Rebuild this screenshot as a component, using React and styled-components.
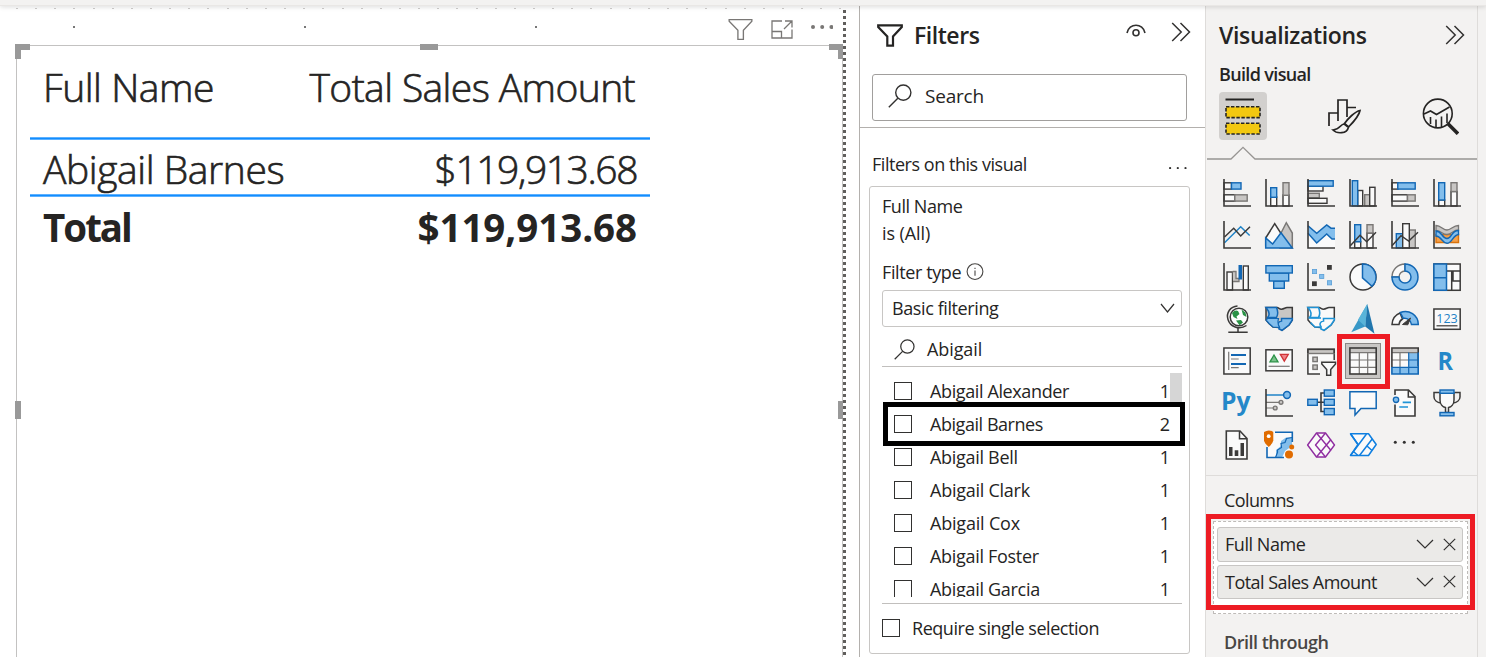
import React from 'react';
import styled, { createGlobalStyle } from 'styled-components';

const Global = createGlobalStyle`
  * { box-sizing: border-box; }
  body { margin: 0; background: #fff; overflow: hidden; }
  #root { font-family: "Open Sans", "Noto Sans", sans-serif; color: #252423; }
`;

const DARK = '#3b3a39';
const BLUE = '#83beec';
const BLUE_EDGE = '#1267b4';
const GRAY = '#c8c6c4';
const GRAY_EDGE = '#797775';
const PAPER = '#fafafa';

/* ---------- page frame ---------- */

const Page = styled.div`
  width: 1486px;
  height: 657px;
  display: flex;
  flex-direction: column;
  overflow: hidden;
`;
const TopBar = styled.div`
  height: 6px;
  flex: none;
  background: #f3f2f1;
  border-bottom: 1px solid #e9e7e5;
  box-shadow: 0 1px 5px rgba(0, 0, 0, 0.14);
  position: relative;
  z-index: 2;
`;
const Main = styled.div`
  flex: 1;
  min-height: 0;
  display: flex;
`;
const Label = styled.span`
  display: block;
  white-space: nowrap;
  font-size: ${(p) => p.$size || 18}px;
  font-weight: ${(p) => p.$weight || 400};
  line-height: ${(p) => p.$line || 26}px;
  letter-spacing: ${(p) => p.$track || 0}px;
  color: ${(p) => p.$color || 'inherit'};
`;
const TableText = styled(Label)`
  font-size: ${(p) => p.$size || 39}px;
  line-height: 44px;
  font-weight: ${(p) => (p.$bold ? 700 : 300)};
  -webkit-text-stroke: ${(p) => (p.$bold ? 0 : 0.65)}px #252423;
`;

/* ---------- report canvas ---------- */

const Canvas = styled.section`
  width: 859px;
  flex: none;
  position: relative;
  display: flex;
  background: #fff;
`;
const CanvasBody = styled.div`
  width: 843px;
  display: flex;
  flex-direction: column;
`;
const GridDots = styled.div`
  height: 1px;
  margin: 2px 0 0 16px;
  background: repeating-linear-gradient(90deg, #cfcdcb 0 2px, transparent 2px 19.15px);
`;
const VisualHeader = styled.div`
  height: 36px;
  display: flex;
  align-items: center;
  justify-content: flex-end;
  padding: 4px 10px 0 0;
  gap: 18px;
  position: relative;
`;
const MoreDots = styled.span`
  display: flex;
  padding-bottom: 4px;
`;
const Speck = styled.i`
  position: absolute;
  top: 17px;
  left: ${(p) => p.$x}px;
  width: 2px;
  height: 2px;
  background: #777;
`;
const PageEdge = styled.div`
  width: 3px;
  margin-top: 4px;
  background: repeating-linear-gradient(180deg, #605e5c 0 3px, transparent 3px 6px);
`;
const Visual = styled.div`
  flex: 1;
  margin-left: 16px;
  border: 1px solid #c3c2c1;
  border-bottom: 0;
  position: relative;
  padding: 18px 0 0 13px;
`;
const Handle = styled.i`
  position: absolute;
  left: ${(p) => p.$x}px;
  top: ${(p) => p.$y}px;
  width: ${(p) => p.$w}px;
  height: ${(p) => p.$h}px;
  background: #999;
`;
const SalesTable = styled.div`
  width: 620px;
  display: flex;
  flex-direction: column;
`;
const SalesRow = styled.div`
  display: flex;
  justify-content: space-between;
  height: ${(p) => p.$h}px;
  padding: ${(p) => p.$top}px ${(p) => p.$right || 13}px 0 13px;
`;
const Rule = styled.div`
  height: 3px;
  background: linear-gradient(#5cb0ff 0 1px, #118dff 1px 2px, #5cb0ff 2px);
`;

/* ---------- filters pane ---------- */

const FiltersPane = styled.aside`
  width: 346px;
  flex: none;
  border-left: 1px solid #b3b0ad;
  background: #fff;
`;
const FiltersTop = styled.div`
  height: 122px;
  border-bottom: 1px solid #b3b0ad;
  padding: 11px 18px 0 12px;
`;
const PaneTitleRow = styled.div`
  display: flex;
  height: 36px;
  align-items: center;
`;
const FilterTitleIcon = styled.span`
  display: flex;
  margin: 0 11px 0 5px;
`;
const PaneActions = styled.div`
  margin: 0 -4px 0 auto;
  display: flex;
  gap: 25px;
  align-items: center;
  padding-bottom: 6px;
`;
const EyeSlot = styled.span`
  display: flex;
  padding-bottom: 2px;
`;
const SearchBox = styled.div`
  height: 47px;
  margin-top: 21px;
  border: 1px solid #a19f9d;
  border-radius: 3px;
  display: flex;
  align-items: center;
  gap: 13px;
  padding: 0 0 3px 15px;
`;
const SectionTitle = styled.div`
  display: flex;
  justify-content: space-between;
  align-items: center;
  padding: 23px 18px 0 12px;
  height: 49px;
`;
const SectionDots = styled.span`
  display: flex;
  padding-top: 8px;
`;
const FilterCard = styled.div`
  margin: 9px 15px 0 9px;
  height: 468px;
  border: 1px solid #c8c6c4;
  border-radius: 3px;
  padding: 6px 7px 0 12px;
`;
const FilterTypeRow = styled.div`
  display: flex;
  align-items: center;
  gap: 5px;
  margin-top: 12px;
  height: 26px;
`;
const Select = styled.div`
  height: 37px;
  margin-top: 5px;
  border: 1px solid #c8c6c4;
  border-radius: 3px;
  display: flex;
  justify-content: space-between;
  align-items: center;
  padding: 0 6px 1px 9px;
`;
const ListSearch = styled.div`
  height: 40px;
  border-bottom: 1px solid #c1bfbd;
  display: flex;
  align-items: center;
  gap: 12px;
  padding: 5px 0 0 12px;
`;
const NameList = styled.div`
  height: 230px;
  padding-top: 7px;
  overflow: hidden;
  position: relative;
`;
const NameRow = styled.div`
  height: 33px;
  display: flex;
  align-items: center;
  padding: 0 12px 0 12px;
`;
const Checkbox = styled.span`
  flex: none;
  width: 18px;
  height: 18px;
  border: 1px solid #323130;
  background: #fff;
  margin-right: ${(p) => p.$gap}px;
`;
const Count = styled.span`
  margin-left: auto;
  font-size: 18px;
`;
const ScrollThumb = styled.i`
  position: absolute;
  right: 0;
  top: 6px;
  width: 12px;
  height: 30px;
  background: #d6d6d6;
`;
const ListRule = styled.div`
  height: 1px;
  margin-top: 6px;
  background: #c1bfbd;
`;
const RequireRow = styled.div`
  display: flex;
  align-items: center;
  height: 48px;
`;
const NameMark = styled.div`
  position: absolute;
  left: 883px;
  top: 402px;
  width: 302px;
  height: 44px;
  border: 5px solid #000;
  z-index: 3;
`;

/* ---------- visualizations pane ---------- */

const VizPane = styled.aside`
  width: 273px;
  flex: none;
  background: #f3f2f1;
  border: solid #dedcda;
  border-width: 0 1px;
  display: flex;
  flex-direction: column;
`;
const Margin = styled.div`
  flex: 1;
  background: #f3f2f1;
`;
const VizTitleRow = styled(PaneTitleRow)`
  margin-top: 11px;
  padding: 0 12px 0 13px;
  justify-content: space-between;
`;
const BuildLabel = styled.div`
  margin-top: 8px;
  padding-left: 13px;
`;
const TabRow = styled.div`
  height: 48px;
  margin-top: 5px;
  padding: 0 18px 0 13px;
  display: flex;
  justify-content: space-between;
  align-items: center;
`;
const ActiveTab = styled.span`
  width: 48px;
  height: 48px;
  border-radius: 4px;
  background: #d2d0ce;
  display: grid;
  place-items: center;
`;
const Notch = styled.svg`
  display: block;
  width: 270px;
  height: 14px;
  margin: 6px 0 0 1px;
`;
const IconGrid = styled.div`
  display: grid;
  grid-template-columns: repeat(6, 42px);
  grid-auto-rows: 42px;
  margin: 12px 0 0 10px;
`;
const IconCell = styled.div`
  display: grid;
  place-items: center;
  ${(p) =>
    p.$selected &&
    `background: #c8c6c4; box-shadow: inset 0 0 0 1px #8a8886; margin: 3px;`}
`;
const VizIcon = styled.svg`
  width: 28px;
  height: 28px;
  overflow: visible;
  display: block;
`;
const Fields = styled.div`
  margin-top: 9px;
  border-top: 1px solid #dedcda;
`;
const FieldsTitle = styled.div`
  padding: 11px 0 0 18px;
`;
const Well = styled.div`
  margin: 8px 10px 0 7px;
  width: 255px;
  height: 93px;
  border: 1px dashed #bebbb8;
  background: #fff;
  padding: 5px 4px 0 3px;
`;
const Pill = styled.div`
  height: ${(p) => p.$h}px;
  margin-bottom: 3px;
  border: 1px solid #c8c6c4;
  border-radius: 3px;
  background: #ebeae8;
  display: flex;
  align-items: center;
  padding: 0 6px 1px 7px;
`;
const PillActions = styled.span`
  margin-left: auto;
  display: flex;
  gap: 9px;
  align-items: center;
`;
const DrillTitle = styled.div`
  padding: 15px 0 0 18px;
`;
const RedMark = styled.div`
  position: absolute;
  left: ${(p) => p.$x}px;
  top: ${(p) => p.$y}px;
  width: ${(p) => p.$w}px;
  height: ${(p) => p.$h}px;
  border: 5px solid #ed1c24;
  z-index: 3;
`;

/* ---------- small drawings ---------- */

const Funnel = ({ w, h, color, stroke }) => (
  <svg width={w} height={h} viewBox="0 0 26 23" fill="none" stroke={color} strokeWidth={stroke}>
    <path d="M1.2 1.3H24.8V3L16 12.4V21.7H10.3V12.4L1.2 3Z" />
  </svg>
);
const Focus = () => (
  <svg width="22" height="19" viewBox="0 0 22 19" fill="none" stroke="#797775" strokeWidth="1.3">
    <path d="M11 1H1V18H21V9.5M1 11.5H10.5V18M13 9L20.5 1.5M14 1H21V7.5" />
  </svg>
);
const Dots = ({ r, gap, color }) => (
  <svg width={gap * 2 + r * 2} height={r * 2} fill={color}>
    {[0, 1, 2].map((i) => (
      <circle key={i} cx={r + i * gap} cy={r} r={r} />
    ))}
  </svg>
);
const Eye = () => (
  <svg width="20" height="14" viewBox="0 0 20 14" fill="none" stroke="#323130" strokeWidth="1.6">
    <path d="M1 9C2 4 6 1.2 10 1.2S18 4 19 9" />
    <circle cx="10" cy="8.7" r="3" />
  </svg>
);
const DoubleChevron = () => (
  <svg width="20" height="20" viewBox="0 0 20 20" fill="none" stroke="#323130" strokeWidth="1.5">
    <path d="M1.2 1L10.2 10L1.2 19M9.5 1L18.5 10L9.5 19" />
  </svg>
);
const Magnifier = ({ size }) => (
  <svg width={size} height={size} viewBox="0 0 24 24" fill="none" stroke="#323130" strokeWidth="1.4">
    <circle cx="15.3" cy="8.6" r="7.6" />
    <path d="M9.8 14.2L0.8 23.2" />
  </svg>
);
const Info = () => (
  <svg width="18" height="18" viewBox="0 0 18 18" fill="none" stroke="#484644" strokeWidth="1.1">
    <circle cx="9" cy="8.6" r="7.9" />
    <path d="M9 7.5V12.8M9 4.7V6" />
  </svg>
);
const Chevron = ({ w = 18 }) => (
  <svg width={w} height="10" viewBox={`0 0 ${w} 10`} fill="none" stroke="#323130" strokeWidth="1.2">
    <path d={`M1 1L${w / 2} 9L${w - 1} 1`} />
  </svg>
);
const Cross = () => (
  <svg width="13" height="13" viewBox="0 0 13 13" fill="none" stroke="#323130" strokeWidth="1.2">
    <path d="M0.8 0.8L12.2 12.2M12.2 0.8L0.8 12.2" />
  </svg>
);
const BuildIcon = () => (
  <svg width="38" height="38" viewBox="0 0 38 38">
    <path d="M1.5 2.5H30" stroke="#252423" strokeWidth="2" />
    <g fill="#f2c811" stroke="#252423" strokeWidth="1.6" strokeDasharray="3.4 1.6">
      <rect x="2" y="9.8" width="34" height="10.8" />
      <rect x="2" y="26.2" width="34" height="10.8" />
    </g>
  </svg>
);
const FormatIcon = () => (
  <svg width="36" height="36" viewBox="0 0 36 36" fill="none" stroke="#252423" strokeWidth="1.7">
    <path d="M2 28V15H11M11 23V2H20V19M20 9.5H29" />
    <path d="M33 12.5C28 13.5 21 20.5 17.5 25.5L21.5 29C26 24.5 32 18 33 12.5Z" fill="#f3f2f1" />
    <path d="M17.2 26C13 26.2 13.5 31.5 6 32C10 36 20 36 21.4 29.3Z" fill="#f3f2f1" />
  </svg>
);
const AnalyticsIcon = () => (
  <svg width="37" height="37" viewBox="0 0 37 37" fill="none" stroke="#252423" strokeWidth="1.6">
    <circle cx="15.8" cy="15.5" r="14.4" />
    <path d="M2 16L8.5 13L14.5 16.5L27.5 9M8.5 19V26M14 21.5V29.5M19.5 18.5V29M25 15.5V25" />
    <path d="M26 25.8L36 35.8" strokeWidth="3.6" />
  </svg>
);

/* ---------- gallery icons, 28 x 28 ---------- */

const Box = ({ x, y, w, h, tone = 'white' }) => {
  const fill = { white: PAPER, blue: BLUE, gray: GRAY }[tone];
  const edge = { white: DARK, blue: BLUE_EDGE, gray: GRAY_EDGE }[tone];
  return <rect x={x} y={y} width={w} height={h} fill={fill} stroke={edge} strokeWidth="1.4" />;
};
const Axis = () => <path d="M1 0V27H28" fill="none" stroke={DARK} strokeWidth="1.6" />;
const Line = ({ d, c = DARK, w = 1.5 }) => <path d={d} fill="none" stroke={c} strokeWidth={w} />;
const Area = ({ d, tone = 'blue' }) => {
  const [fill, edge] = { blue: [BLUE, BLUE_EDGE], gray: [GRAY, GRAY_EDGE], white: [PAPER, DARK] }[tone];
  return <path d={d} fill={fill} stroke={edge} strokeWidth="1.5" />;
};
const OHIO = 'M1 2.5H12C14 3 14.5 4.3 16.5 4.2C19 4.2 20 2.6 22 2.5H27.3V15L24 20L17 25.3L13.8 22.5L8 22L4 18.5L1 15Z';
const OHIO_WEST = 'M1 2.5H11.5C13 6 13.5 9 11.5 12.5H2.5C5 10 4 6 1 2.5Z';
const OHIO_SOUTH = 'M14 24V21.5C12 19.5 13 16.5 16.5 16V13.5H27.3V15L24 20L17 25.3Z';

const icons = [
  <><Box x="1" y="15.8" w="11" h="6.3" /><Box x="1" y="3.8" w="7.5" h="6.3" /><Box x="8.5" y="3.8" w="9.5" h="6.3" tone="blue" /><Box x="11.8" y="15.8" w="12.4" h="6.3" tone="gray" /><Axis /></>,
  <><Box x="5.7" y="18" w="6" h="9" /><Box x="5.7" y="8.7" w="6" h="9.6" tone="blue" /><Box x="18" y="16" w="6" h="11" /><Box x="18" y="3.7" w="6" h="12.6" tone="gray" /><Axis /></>,
  <><Box x="1" y="7" w="15" h="5" /><Box x="1" y="1.7" w="25.2" h="5.5" tone="blue" /><Box x="1" y="14.3" w="11.3" h="4.5" tone="gray" /><Box x="1" y="19.3" w="19" h="5" /><Axis /></>,
  <><Box x="8.7" y="11.5" w="5" h="15.5" /><Box x="3.3" y="1.7" w="5.4" h="25.3" tone="blue" /><Box x="15.7" y="15.7" w="5" h="11.3" tone="gray" /><Box x="20.7" y="8.3" w="5.3" h="18.7" /><Axis /></>,
  <><Box x="1" y="3.8" w="6" h="6.3" /><Box x="6.8" y="3.8" w="17.4" h="6.3" tone="blue" /><Box x="1" y="15.8" w="15.5" h="6.3" /><Box x="16.5" y="15.8" w="7.7" h="6.3" tone="gray" /><Axis /></>,
  <><Box x="5.7" y="21" w="6" h="6" /><Box x="5.7" y="3.7" w="6" h="17.3" tone="blue" /><Box x="18" y="12.5" w="6" h="14.5" /><Box x="18" y="3.7" w="6" h="8.8" tone="gray" /><Axis /></>,

  <><Line d="M1.5 21.8L17.7 5.7L26.7 14.5" c="#1f83c7" /><Line d="M1.5 16L10.7 7.3L17.7 15L27 5.7" /><Axis /></>,
  <><Area d="M15 14L21.3 1.7L27.3 12V27H15Z" tone="gray" /><Area d="M0.7 17L9.7 2.7L17 14L10 24H0.7Z" tone="white" /><Area d="M0.7 27V17L7.7 23L16 11.7L27.3 27Z" /></>,
  <><path d="M1 12.3L9.7 22L19.7 13L28 18V27H1Z" fill={PAPER} /><path d="M1 4.7L9.7 12.3L19.7 4L24 7.2H28V18H25L19.7 13L9.7 22L1 12.3Z" fill={BLUE} /><Line d="M1 4.7L9.7 12.3L19.7 4L24 7.2H28M28 18H25L19.7 13L9.7 22L1 12.3" c={BLUE_EDGE} /><Axis /></>,
  <><Box x="5.7" y="20.5" w="6" h="6.5" /><Box x="5.7" y="3.7" w="6" h="17" tone="blue" /><Box x="18" y="12" w="6" h="15" /><Box x="18" y="3.7" w="6" h="8.3" tone="gray" /><Line d="M1.3 24.7L11 14.3L17.7 20.7L27 11.3" /><Axis /></>,
  <><Box x="5.3" y="12.7" w="6.4" h="14.3" tone="blue" /><Box x="18.3" y="9" w="6" h="18" tone="gray" /><Box x="11.7" y="2.7" w="6.6" h="24.3" /><Line d="M1 24.7L10 14.7L17.7 20L27 11.3" /><Axis /></>,
  <><path d="M3 13.5H25.5V21.5H3Z" fill="#f5a04a" stroke="#d9730d" strokeWidth="1.4" /><path d="M3 4.5C8 4.5 10 9 14 9C18 9 20 4.5 25.5 4.5V9C20 9 19 13.5 14 13.5C9 13.5 9 10 3 9.5Z" fill={GRAY} stroke={GRAY_EDGE} strokeWidth="1.3" /><path d="M3 10C9 10 9 17.5 14 17.5C19 17.5 18 9.5 25.5 9.5V13.5C20 14 19 22.3 14 22.3C9 22.3 9 15.5 3 15Z" fill={BLUE} stroke={BLUE_EDGE} strokeWidth="1.4" /><Axis /></>,

  <><Box x="4" y="9" w="5.5" h="18" /><path d="M9.7 8.5H13V15.5H16V18.5H10" fill={GRAY} stroke={GRAY_EDGE} strokeWidth="1.3" /><rect x="15.5" y="2" width="3.5" height="14.5" fill={BLUE_EDGE} /><Box x="20.3" y="3" w="5" h="24" /><Axis /></>,
  <><Box x="8.7" y="18" w="10.6" h="7.3" tone="blue" /><Box x="4.3" y="10" w="19.4" h="8" tone="blue" /><Box x="0.9" y="2.7" w="26.4" h="7.3" tone="blue" /></>,
  <><g fill={DARK}><rect x="20" y="2" width="4.8" height="4.8" /><rect x="5" y="18.3" width="4.8" height="4.8" /></g><g fill={BLUE} stroke="#5a9fd6" strokeWidth=".8"><rect x="5.4" y="6.4" width="4.2" height="4.2" /><rect x="12.6" y="11.4" width="4.2" height="4.2" /><rect x="20.4" y="17.7" width="4.2" height="4.2" /></g><Axis /></>,
  <><circle cx="14" cy="14" r="13" fill={PAPER} stroke={DARK} strokeWidth="1.5" /><Area d="M13.5 1A13 13 0 0 1 23 23.3L13.5 14.8Z" /></>,
  <><path d="M14 1A13 13 0 0 0 1 14H8A6 6 0 0 1 14 8Z" fill={PAPER} stroke={GRAY_EDGE} strokeWidth="1.4" /><Area d="M14 1A13 13 0 1 1 1 14H8A6 6 0 1 0 14 8Z" /></>,
  <><rect x="0.9" y="1" width="26.3" height="26.3" fill={PAPER} stroke={DARK} strokeWidth="1.5" /><Line d="M13.5 8H27M20 8V18M19.5 18H27M18.7 8V27" /><Area d="M0.9 1H13.5V27.3H0.9ZM0.9 14.7H13.5" /></>,

  <><circle cx="16" cy="12" r="8.8" fill="#fff" stroke={DARK} strokeWidth="1.5" /><path d="M9 8Q12 4.5 15 6L16.5 9L13.5 11.5L14.5 14L10.5 12ZM18.5 4.5L22.5 7.5L23.5 12L20 10ZM13 15.5L18 15L20 17.5L16.5 20.3Z" fill="#2a9246" /><Line d="M14.5 1C7 1.5 3 8 5 14.5C7 21.5 16 25.5 23.5 20.5M15 23.5V27M5.3 27.2H24.7" /></>,
  <><path d={OHIO} fill={GRAY} stroke={DARK} strokeWidth="1.5" /><Area d={OHIO_WEST} /><Area d={OHIO_SOUTH} /><path d="M2.5 13.5H13.5C12.5 17 13 20 14.5 22.5L8 22L4 18.5L1 15Z" fill={BLUE} stroke={BLUE_EDGE} strokeWidth="1.2" /></>,
  <><path d={OHIO} fill={PAPER} stroke={DARK} strokeWidth="1.5" /><g fill={PAPER} stroke="#1f93d6" strokeWidth="1.6"><path d={OHIO_WEST} /><path d="M2 13H14" /><path d={OHIO_SOUTH} /><path d="M3.5 17.5L8 22H14" /></g></>,
  <><path d="M18.3 -1L2.3 27.3L16.2 21.5Z" fill="#3898c7" /><path d="M18.3 -1L25.5 28.7L16.2 21.5Z" fill="#2176ad" /><path d="M18.3 -1L16.2 21.5L9 14.8Z" fill="#58b4d9" /></>,
  <><path d="M1 19.5A13 13 0 0 1 9 8L11.5 14Q8.5 15.5 8 19.5Z" fill={PAPER} stroke={DARK} strokeWidth="1.5" /><Area d="M9.3 7.5A13 13 0 0 1 27.3 19.5H20.5A7 7 0 0 0 12.3 13.3Z" /><path d="M11.5 19.5L19.5 13L16.8 19.8Z" fill={DARK} stroke={DARK} strokeWidth="1" /></>,
  <><rect x="0.9" y="4" width="26.3" height="20.3" fill={PAPER} stroke={DARK} strokeWidth="1.5" /><text x="14" y="18" textAnchor="middle" fontSize="13.5" textLength="21.5" lengthAdjust="spacingAndGlyphs" fill="#1f83c7" fontFamily="Open Sans, sans-serif">123</text><Line d="M3.5 20.8H24.5" w={1.2} /></>,

  <><rect x="0.9" y="1" width="26.3" height="26" fill={PAPER} stroke={DARK} strokeWidth="1.5" /><Line d="M5.7 4.7V23M8 12H15.7M8 20.7H15.7" c={GRAY_EDGE} w={1.2} /><Line d="M8 8H23M8 17H23" c={BLUE_EDGE} w={2.2} /></>,
  <><rect x="0.9" y="2.8" width="26.3" height="21" fill={PAPER} stroke={DARK} strokeWidth="1.5" /><path d="M9 8L13 14.8H5Z" fill="#7cc08c" stroke="#2a9246" strokeWidth="1.3" /><path d="M19.3 14.2L15.3 7.3H23.3Z" fill="#f0848a" stroke="#d13438" strokeWidth="1.3" /><Line d="M3.5 19.3H24.7" c={GRAY_EDGE} w={1.2} /></>,
  <><rect x="0.9" y="2.5" width="26.3" height="24.5" fill={PAPER} stroke={DARK} strokeWidth="1.5" /><Box x="0.9" y="2.5" w="26.3" h="4" tone="gray" /><Line d="M0.9 6.3V2.3H27.2V6.3" /><Box x="5.9" y="10.2" w="4.4" h="4.4" tone="gray" /><Box x="5.9" y="18" w="4.4" h="4.4" tone="gray" /><rect x="13" y="13" width="15.5" height="16" fill="#f3f2f1" /><path d="M14.8 15.2H28.5V17L23.7 22.5V28.3H19.7V22.5L14.8 17Z" fill={PAPER} stroke={DARK} strokeWidth="1.5" /></>,
  <><rect x="0.9" y="1" width="26.3" height="26" fill={PAPER} /><rect x="0.9" y="1" width="26.3" height="4.6" fill={GRAY} /><Line d="M0.9 5.6H27.2M10.3 5.6V27M18.7 5.6V27M0.9 13H27.2M0.9 20.3H27.2" c={GRAY_EDGE} w={1.2} /><rect x="0.9" y="1" width="26.3" height="26" fill="none" stroke={DARK} strokeWidth="1.6" /></>,
  <><rect x="0.9" y="1" width="26.3" height="26" fill={PAPER} /><rect x="0.9" y="1" width="26.3" height="4.6" fill={GRAY} /><path d="M17.7 5.6H27.2V27H0.9V20.3H17.7Z" fill={BLUE} /><Line d="M0.9 5.6H27.2M9 5.6V20.3M0.9 13H17.7" c={GRAY_EDGE} w={1.2} /><Line d="M17.7 5.6V27M9 20.3V27M0.9 20.3H27.2M17.7 13H27.2" c={BLUE_EDGE} w={1.2} /><Line d="M27.2 19V1H0.9V20" w={1.6} /><Line d="M0.9 20V27H27.2V5.6" c={BLUE_EDGE} w={1.6} /></>,
  <text x="4.4" y="22.8" fontSize="24.5" fontWeight="700" fill="#2488c9" textLength="15.5" lengthAdjust="spacingAndGlyphs" fontFamily="Open Sans, sans-serif">R</text>,

  <text x="-2" y="20.8" fontSize="25.5" fontWeight="700" fill="#2488c9" textLength="29.5" lengthAdjust="spacingAndGlyphs" fontFamily="Open Sans, sans-serif">Py</text>,
  <><Line d="M1 6H19" c="#1f83c7" /><circle cx="22" cy="6" r="3.4" fill={BLUE} stroke={BLUE_EDGE} strokeWidth="1.5" /><Line d="M1 13.3H14.5M1 19H8.5" c={GRAY_EDGE} w={1.2} /><g fill={GRAY} stroke={GRAY_EDGE} strokeWidth="1.4"><circle cx="16" cy="13.3" r="1.9" /><circle cx="10.2" cy="19" r="1.9" /></g><Axis /></>,
  <><Line d="M10 13.3H17M17 4H14V22.5H17" w={1.6} /><Box x="0.8" y="10.3" w="9.5" h="6" tone="blue" /><Box x="17.3" y="1" w="10" h="6.2" tone="blue" /><Box x="17.3" y="10.3" w="10" h="6" tone="blue" /><Box x="17.3" y="19.5" w="10" h="6.2" tone="blue" /></>,
  <path d="M0.9 2.8H27.2V19.5H12L6 26V19.5H0.9Z" fill={PAPER} stroke={BLUE_EDGE} strokeWidth="1.5" />,
  <><path d="M4 6V1H17.5L24 7.5V27H4V15.5" fill={PAPER} stroke={DARK} strokeWidth="1.6" /><Line d="M17.3 1V8H24" /><circle cx="5" cy="10.8" r="2.7" fill={BLUE} stroke={BLUE_EDGE} strokeWidth="1.3" /><Line d="M11.7 13.3H20M8.3 18H17" c="#1f93d6" w={1.7} /></>,
  <><Line d="M6.5 3.5H1V8C1 11 4 13.5 8 14M21.5 3.5H27V8C27 11 24 13.5 20 14" /><path d="M7 4H21V11C21 15.5 18 18 15.5 18.5V23.5H12.5V18.5C10 18 7 15.5 7 11Z" fill={PAPER} stroke={DARK} strokeWidth="1.5" /><Box x="7" y="1" w="14" h="3.3" tone="blue" /><Box x="7" y="23.5" w="14" h="3.3" tone="blue" /></>,

  <><path d="M3.3 0H17L24 7.5V28H3.3Z" fill={PAPER} stroke={DARK} strokeWidth="1.6" /><Line d="M16.5 0V7.7H24" /><path d="M6 16H9.5V25H6ZM11.7 19.3H15.3V25H11.7ZM17.5 12H21V25H17.5Z" fill={DARK} /></>,
  <><rect x="2" y="1" width="25.5" height="26" fill={PAPER} /><path d="M11 26.5V19L16 15V10L21 6.5H27V15L20 20L17 26.5Z" fill={BLUE} /><Line d="M10 1.2H27.3V11M2 16V26.5H19" c={BLUE_EDGE} w={1.6} /><Line d="M27 6.5L21.5 7.5L20 11.5L16 12.5L16.5 16.5L12.5 19V21.5L10.5 26.5" c={BLUE_EDGE} w={1.2} /><path d="M-1 1Q4 -2 8.3 1V9.5Q8 12 3.7 16Q-0.7 12 -1 9.5Z" fill="#e06c00" /><circle cx="3.7" cy="5.2" r="1.9" fill="#fff" /><circle cx="24" cy="23.5" r="4" fill="#e06c00" /><circle cx="26.7" cy="16" r="2.5" fill="#e06c00" /></>,
  <g fill={PAPER} stroke="#8f2da0" strokeWidth="1.4" strokeLinejoin="round"><path d="M9.5 2H18.5L27.5 14L18.5 26H9.5L0.6 14Z" /><path d="M9.5 2L14 7.5L18.5 2M9.5 26L14 20.5L18.5 26M14 7.5L8.5 14L14 20.5M14 7.5L24 19.5M14 20.5L24 8.5" fill="none" /></g>,
  <g fill={PAPER} stroke="#0f7fe0" strokeWidth="1.5" strokeLinejoin="round"><path d="M1.5 2.8H19.5L27.2 13.5L19.5 24.5H1.5L9 13.5Z" /><path d="M1.5 24.5L17.5 3M23.2 8L10.5 24.5M9 13.5L1.5 2.8M4.5 20.5L9 24.5M18 15L23 19.5" /></g>,
  <g fill="#323130"><circle cx="4.3" cy="11.2" r="1.5" /><circle cx="13.3" cy="11.2" r="1.5" /><circle cx="22.3" cy="11.2" r="1.5" /></g>,
];

const names = [
  ['Abigail Alexander', 1, -0.38],
  ['Abigail Barnes', 2, -0.45],
  ['Abigail Bell', 1, -0.3],
  ['Abigail Clark', 1, -0.25],
  ['Abigail Cox', 1, -0.2],
  ['Abigail Foster', 1, -0.3],
  ['Abigail Garcia', 1, -0.3],
];

const FieldPill = ({ h, track, children }) => (
  <Pill $h={h}>
    <Label $track={track}>{children}</Label>
    <PillActions>
      <Chevron w={18} />
      <Cross />
    </PillActions>
  </Pill>
);

export default function App() {
  return (
    <Page>
      <Global />
      <TopBar />
      <Main>
        <Canvas>
          <CanvasBody>
            <GridDots />
            <VisualHeader>
              <Speck $x={73} />
              <Speck $x={304} />
              <Speck $x={535} />
              <Funnel w={25} h={23} color="#797775" stroke={1.4} />
              <Focus />
              <MoreDots>
                <Dots r={2} gap={9.2} color="#797775" />
              </MoreDots>
            </VisualHeader>
            <Visual>
              <Handle $x={-2} $y={-2} $w={15} $h={6} />
              <Handle $x={-2} $y={-2} $w={6} $h={15} />
              <Handle $x={403} $y={-2} $w={18} $h={6} />
              <Handle $x={812} $y={-2} $w={14} $h={6} />
              <Handle $x={821} $y={-2} $w={5} $h={15} />
              <Handle $x={-2} $y={355} $w={6} $h={18} />
              <Handle $x={821} $y={355} $w={5} $h={18} />
              <SalesTable>
                <SalesRow $h={73} $top={1} $right={15}>
                  <TableText $track={-0.45}>Full Name</TableText>
                  <TableText $track={-0.6}>Total Sales Amount</TableText>
                </SalesRow>
                <Rule />
                <SalesRow $h={54} $top={7}>
                  <TableText $track={-0.42}>Abigail Barnes</TableText>
                  <TableText $track={-1.42}>$119,913.68</TableText>
                </SalesRow>
                <Rule />
                <SalesRow $h={50} $top={8}>
                  <TableText $bold $size={38.5} $track={-2}>Total</TableText>
                  <TableText $bold $size={38.5} $track={-0.05}>$119,913.68</TableText>
                </SalesRow>
              </SalesTable>
            </Visual>
          </CanvasBody>
          <PageEdge />
        </Canvas>

        <FiltersPane>
          <FiltersTop>
            <PaneTitleRow>
              <FilterTitleIcon>
                <Funnel w={26} h={23} color="#252423" stroke={2.2} />
              </FilterTitleIcon>
              <Label $size={23} $weight={600} $track={-0.45}>Filters</Label>
              <PaneActions>
                <EyeSlot>
                  <Eye />
                </EyeSlot>
                <DoubleChevron />
              </PaneActions>
            </PaneTitleRow>
            <SearchBox>
              <Magnifier size={24} />
              <Label $size={19} $track={-0.2}>Search</Label>
            </SearchBox>
          </FiltersTop>
          <SectionTitle>
            <Label $track={-0.46}>Filters on this visual</Label>
            <SectionDots>
              <Dots r={1.1} gap={7.7} color="#323130" />
            </SectionDots>
          </SectionTitle>
          <FilterCard>
            <Label $line={27} $track={-0.45}>Full Name</Label>
            <Label $line={27} $track={-0.1}>is (All)</Label>
            <FilterTypeRow>
              <Label $track={-0.4}>Filter type</Label>
              <Info />
            </FilterTypeRow>
            <Select>
              <Label $track={-0.4}>Basic filtering</Label>
              <Chevron w={15} />
            </Select>
            <ListSearch>
              <Magnifier size={21} />
              <Label $track={-0.1}>Abigail</Label>
            </ListSearch>
            <NameList>
              {names.map(([name, count, track]) => (
                <NameRow key={name}>
                  <Checkbox $gap={18} />
                  <Label $track={track}>{name}</Label>
                  <Count>{count}</Count>
                </NameRow>
              ))}
              <ScrollThumb />
            </NameList>
            <ListRule />
            <RequireRow>
              <Checkbox $gap={12} />
              <Label $track={-0.46}>Require single selection</Label>
            </RequireRow>
          </FilterCard>
        </FiltersPane>

        <VizPane>
          <VizTitleRow>
            <Label $size={23} $weight={600} $track={-0.35}>Visualizations</Label>
            <DoubleChevron />
          </VizTitleRow>
          <BuildLabel>
            <Label $weight={600} $track={-0.65}>Build visual</Label>
          </BuildLabel>
          <TabRow>
            <ActiveTab>
              <BuildIcon />
            </ActiveTab>
            <FormatIcon />
            <AnalyticsIcon />
          </TabRow>
          <Notch viewBox="0 0 270 14" fill="none" stroke="#979593" strokeWidth="1.3">
            <path d="M0 13H24L36 1.3L48 13H270" />
          </Notch>
          <IconGrid>
            {icons.map((icon, i) => (
              <IconCell key={i} $selected={i === 27}>
                <VizIcon viewBox="0 0 28 28">{icon}</VizIcon>
              </IconCell>
            ))}
          </IconGrid>
          <Fields>
            <FieldsTitle>
              <Label $track={-0.6}>Columns</Label>
            </FieldsTitle>
            <Well>
              <FieldPill h={35} track={-0.45}>Full Name</FieldPill>
              <FieldPill h={34} track={-0.53}>Total Sales Amount</FieldPill>
            </Well>
            <DrillTitle>
              <Label $weight={600} $track={-0.5} $color="#484644">Drill through</Label>
            </DrillTitle>
          </Fields>
        </VizPane>
        <Margin />
      </Main>
      <NameMark />
      <RedMark $x={1337} $y={334} $w={53} $h={55} />
      <RedMark $x={1206} $y={514} $w={269} $h={96} />
    </Page>
  );
}
